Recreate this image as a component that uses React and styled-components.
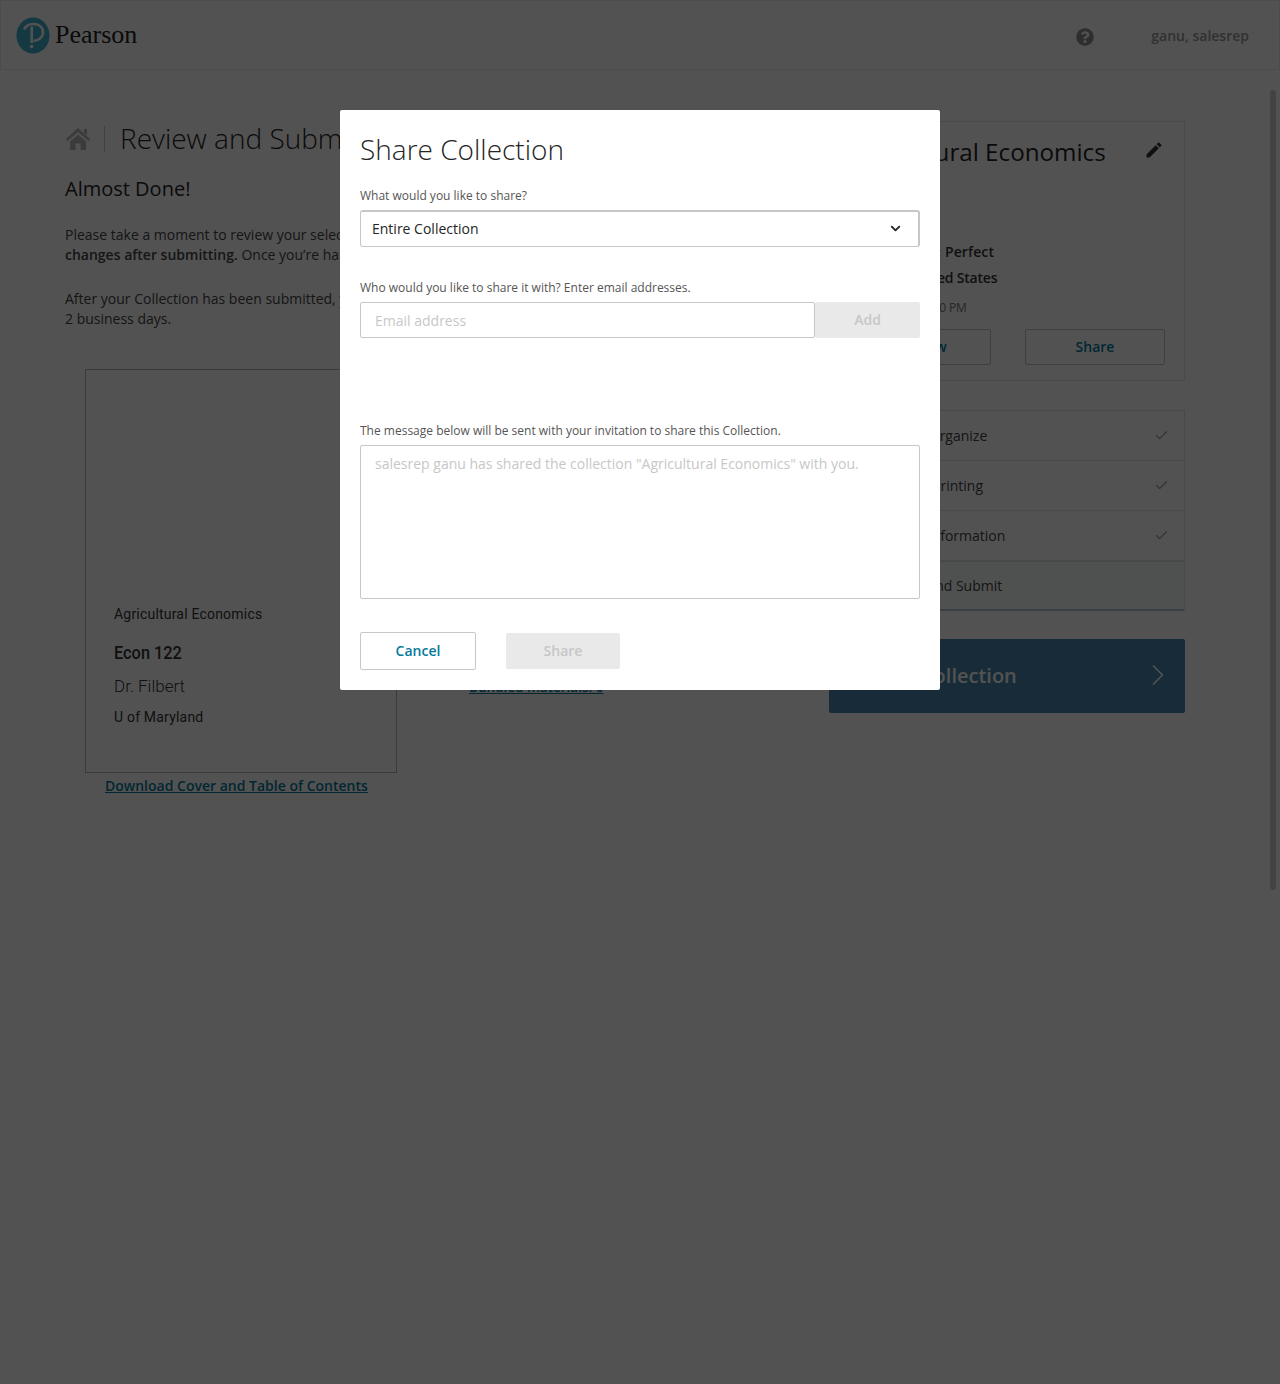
import React from "react";
import styled, { createGlobalStyle } from "styled-components";
import { FaQuestionCircle } from "react-icons/fa";
import { MdEdit } from "react-icons/md";
import { Check, ChevronDown, ChevronRight } from "lucide-react";

const GlobalStyle = createGlobalStyle`
  html, body {
    margin: 0;
    padding: 0;
    background: #fff;
    font-family: "Open Sans", "Liberation Sans", sans-serif;
    color: #333;
  }
  * {
    box-sizing: border-box;
  }
`;

const Page = styled.div`
  position: relative;
  width: 1280px;
  height: 1384px;
  overflow: hidden;
  background: #fff;
`;

const Header = styled.header`
  height: 70px;
  display: flex;
  align-items: center;
  padding: 0 30px 0 15px;
  border: 1px solid #ebebeb;
`;

const LogoWrap = styled.div`
  display: flex;
  align-items: center;
  gap: 5px;
  flex: 1;
`;

const LogoText = styled.span`
  font-family: "Liberation Serif", serif;
  font-size: 26px;
  color: #222;
`;

const HelpIcon = styled(FaQuestionCircle)`
  width: 18px;
  height: 18px;
  color: #8f8f8f;
  margin: 4px 57px 0 0;
`;

const UserName = styled.span`
  font-size: 14px;
  font-weight: 600;
  color: #9a9a9a;
`;

const ScrollThumb = styled.div`
  position: absolute;
  top: 90px;
  left: 1270px;
  width: 6px;
  height: 800px;
  border-radius: 3px;
  background: #d0d0d0;
`;

const Main = styled.main`
  display: flex;
  padding: 51px 0 0 65px;
`;

const LeftCol = styled.div`
  width: 764px;
  flex: none;
`;

const TitleRow = styled.div`
  display: flex;
  align-items: center;
  height: 36px;
`;

const HomeSvg = styled.svg`
  margin-left: 1px;
  fill: #b9b9b9;
`;

const Divider = styled.span`
  width: 1px;
  height: 26px;
  background: #c9c9c9;
  margin: 0 15px 0 14px;
`;

const PageTitle = styled.h1`
  margin: -2px 0 0;
  font-size: 28px;
  font-weight: 300;
  color: #252525;
  white-space: nowrap;
`;

const SubTitle = styled.h2`
  margin: 18px 0 0;
  font-size: 20px;
  line-height: 28px;
  font-weight: 400;
  color: #252525;
`;

const Paragraph = styled.p`
  margin: ${(props) => (props.$first ? "22px" : "24px")} 0 0;
  font-size: 14px;
  line-height: 20px;
  color: #444;
  white-space: nowrap;

  strong {
    font-weight: 600;
  }
`;

const CoverRow = styled.div`
  display: flex;
  margin: 40px 0 0 20px;
`;

const CoverCol = styled.div`
  width: 312px;
  flex: none;
`;

const CoverBox = styled.div`
  height: 404px;
  border: 1px solid #b5b5b5;
  padding: 0 0 45px 28px;
  display: flex;
  flex-direction: column;
  justify-content: flex-end;
  font-family: Roboto, "Liberation Sans", sans-serif;
  color: #333;
`;

const CoverTitle = styled.div`
  font-size: 14px;
  line-height: 18px;
  letter-spacing: 0.2px;
`;

const CoverCourse = styled.div`
  margin-top: 18px;
  font-size: 19px;
  line-height: 24px;
  font-weight: 500;
  transform: scaleX(0.86);
  transform-origin: left center;
`;

const CoverAuthor = styled.div`
  margin-top: 9px;
  font-size: 17px;
  line-height: 24px;
  font-weight: 300;
`;

const CoverSchool = styled.div`
  margin-top: 9px;
  font-size: 14px;
  line-height: 20px;
  letter-spacing: 0.2px;
`;

const TealLink = styled.a`
  color: #047a9c;
  font-size: ${(props) => (props.$small ? "13.5px" : "14px")};
  font-weight: 600;
  text-decoration: underline;
  white-space: nowrap;
`;

const DownloadRow = styled.div`
  padding-left: 20px;
  margin-top: 2px;
  line-height: 20px;
`;

const BundledCol = styled.div`
  margin-left: 72px;
  padding-top: 307px;
  line-height: 20px;
`;

const RightCol = styled.aside`
  width: 356px;
  flex: none;
`;

const SummaryCard = styled.section`
  height: 260px;
  border: 1px solid #e3e3e3;
  padding: 11px 19px 0;
`;

const SummaryHead = styled.div`
  display: flex;
  justify-content: space-between;
  align-items: flex-start;
`;

const SummaryTitle = styled.h2`
  margin: 0;
  font-size: 24.2px;
  line-height: 38px;
  font-weight: 400;
  color: #252525;
`;

const EditIcon = styled(MdEdit)`
  width: 20px;
  height: 20px;
  margin: 7px 1px 0 0;
  color: #333;
`;

const SpecLine = styled.div`
  margin-top: ${(props) => props.$top}px;
  font-size: ${(props) => (props.$note ? "12px" : "14px")};
  line-height: 20px;
  font-weight: ${(props) => (props.$note ? 400 : 600)};
  letter-spacing: ${(props) => props.$tracking || 0}px;
  color: ${(props) => (props.$note ? "#777" : "#333")};
`;

const SummaryActions = styled.div`
  display: flex;
  justify-content: space-between;
  margin-top: 11px;
`;

const OutlineButton = styled.button`
  width: ${(props) => props.$width}px;
  height: 36px;
  padding: 0 0 2px;
  background: #fff;
  border: 1px solid #c7c7c7;
  border-radius: 2px;
  color: #047a9c;
  font-family: inherit;
  font-size: 14px;
  font-weight: 600;
`;

const StepList = styled.ul`
  list-style: none;
  margin: 29px 0 0;
  padding: 0;
  border: 1px solid #e3e3e3;
`;

const StepItem = styled.li`
  height: 50px;
  display: flex;
  align-items: center;
  justify-content: space-between;
  padding: 0 15px 0 48px;
  font-size: 14px;
  color: #444;
  border-bottom: ${(props) =>
    props.$active ? "2px solid #a9c9d2" : "1px solid #e3e3e3"};
  border-top: ${(props) => (props.$active ? "1px solid #cfe2de" : "none")};
  background: ${(props) => (props.$active ? "#f4fbf8" : "#fff")};

  &:last-child {
    margin-bottom: -1px;
  }
`;

const StepCheck = styled(Check)`
  width: 15px;
  height: 15px;
  color: #a0a0a0;
`;

const SubmitButton = styled.button`
  width: 356px;
  height: 74px;
  margin-top: 28px;
  display: flex;
  align-items: center;
  justify-content: space-between;
  padding: 0 9px 2px 18px;
  border: none;
  border-radius: 2px;
  background: #478aad;
  color: #fff;
  font-family: inherit;
  font-size: 20px;
  font-weight: 600;
`;

const Overlay = styled.div`
  position: absolute;
  inset: 0;
  background: rgba(0, 0, 0, 0.68);
`;

const Modal = styled.div`
  position: absolute;
  top: 110px;
  left: 340px;
  width: 600px;
  height: 580px;
  background: #fff;
  border-radius: 2px;
  padding: 19px 20px 20px;
`;

const ModalTitle = styled.h2`
  margin: 0;
  font-size: 28px;
  line-height: 40px;
  font-weight: 300;
  color: #252525;
`;

const FieldLabel = styled.label`
  display: block;
  margin-top: ${(props) => props.$top}px;
  font-size: 12px;
  line-height: 16px;
  color: #555;
`;

const SelectBox = styled.div`
  height: 37px;
  margin-top: 6px;
  display: flex;
  align-items: center;
  justify-content: space-between;
  padding: 0 15px 2px 11px;
  border: 1px solid #c7c7c7;
  border-top-width: 2px;
  border-right-width: 2px;
  border-radius: 3px;
  font-size: 14px;
  color: #252525;
`;

const EmailRow = styled.div`
  display: flex;
  margin-top: 6px;
`;

const EmailInput = styled.input`
  width: 455px;
  height: 36px;
  padding: 0 14px;
  border: 1px solid #c7c7c7;
  border-radius: 2px;
  outline: none;
  font-family: inherit;
  font-size: 14px;

  &::placeholder {
    color: #c7c7c7;
    opacity: 1;
  }
`;

const DisabledButton = styled.button`
  width: ${(props) => props.$width}px;
  height: 36px;
  padding: 0 0 2px;
  border: none;
  border-radius: 2px;
  background: #e9e9e9;
  color: #c7c7c7;
  font-family: inherit;
  font-size: 14px;
  font-weight: 600;
`;

const MessageBox = styled.textarea`
  display: block;
  width: 560px;
  height: 154px;
  margin-top: 6px;
  padding: 8px 14px;
  border: 1px solid #c7c7c7;
  border-radius: 2px;
  outline: none;
  resize: none;
  font-family: inherit;
  font-size: 14px;
  line-height: 20px;

  &::placeholder {
    color: #c7c7c7;
    opacity: 1;
  }
`;

const ModalActions = styled.div`
  display: flex;
  align-items: center;
  gap: 30px;
  margin-top: 33px;
`;

const CancelButton = styled.button`
  width: 116px;
  height: 38px;
  padding: 0 0 2px;
  background: #fff;
  border: 1px solid #c7c7c7;
  border-radius: 2px;
  color: #047a9c;
  font-family: inherit;
  font-size: 14px;
  font-weight: 600;
`;

const PearsonMark = () => (
  <svg width="34" height="37" viewBox="0 0 34 37">
    <ellipse cx="17" cy="18.5" rx="16.5" ry="18" fill="#3fb0cc" />
    <path
      d="M8 12.5C10 8.5 14 6.8 18 7c5.5 0.3 9 3.7 9 8.3 0 5-4 8.2-9.5 8.7"
      fill="none"
      stroke="#fff"
      strokeWidth="2.6"
    />
    <path d="M14.4 9.500h2.600v16.500h-2.600z" fill="#fff" />
    <circle cx="15.7" cy="29.500" r="1.800" fill="#fff" />
  </svg>
);

const HomeGlyph = () => (
  <HomeSvg width="24" height="22" viewBox="0 0 24 22">
    <path d="M12 0 24 11 22.500 13 12 4 1.500 13 0 11Z" />
    <path d="M18 1h3v6.500l-3-2.800Z" />
    <path d="M4 13.500 12 6.500 20 13.500V22H14.500V15.500H9.500V22H4Z" />
  </HomeSvg>
);

const App = () => {
  return (
    <Page>
      <GlobalStyle />
      <Header>
        <LogoWrap>
          <PearsonMark />
          <LogoText>Pearson</LogoText>
        </LogoWrap>
        <HelpIcon />
        <UserName>ganu, salesrep</UserName>
      </Header>
      <ScrollThumb />
      <Main>
        <LeftCol>
          <TitleRow>
            <HomeGlyph />
            <Divider />
            <PageTitle>Review and Submit</PageTitle>
          </TitleRow>
          <SubTitle>Almost Done!</SubTitle>
          <Paragraph $first>
            Please take a moment to review your selections.
            <br />
            <strong>changes after submitting.</strong> Once you’re happy with it, submit.
          </Paragraph>
          <Paragraph>
            After your Collection has been submitted, you will hear from us within
            <br />2 business days.
          </Paragraph>
          <CoverRow>
            <CoverCol>
              <CoverBox>
                <CoverTitle>Agricultural Economics</CoverTitle>
                <CoverCourse>Econ 122</CoverCourse>
                <CoverAuthor>Dr. Filbert</CoverAuthor>
                <CoverSchool>U of Maryland</CoverSchool>
              </CoverBox>
              <DownloadRow>
                <TealLink href="#">Download Cover and Table of Contents</TealLink>
              </DownloadRow>
            </CoverCol>
            <BundledCol>
              <TealLink href="#" $small>Bundled materials: 0</TealLink>
            </BundledCol>
          </CoverRow>
        </LeftCol>
        <RightCol>
          <SummaryCard>
            <SummaryHead>
              <SummaryTitle>Agricultural Economics</SummaryTitle>
              <EditIcon />
            </SummaryHead>
            <SpecLine $top={71} $tracking={0.1}>Binding Type: Perfect</SpecLine>
            <SpecLine $top={6} $tracking={-0.2}>Country: United States</SpecLine>
            <SpecLine $top={10} $tracking={-0.15} $note>Saved 3/1/19 3:30 PM</SpecLine>
            <SummaryActions>
              <OutlineButton $width={142}>Preview</OutlineButton>
              <OutlineButton $width={140}>Share</OutlineButton>
            </SummaryActions>
          </SummaryCard>
          <StepList>
            <StepItem>Build &amp; Organize<StepCheck strokeWidth={2} /></StepItem>
            <StepItem>Custom Printing<StepCheck strokeWidth={2} /></StepItem>
            <StepItem>Course Information<StepCheck strokeWidth={2} /></StepItem>
            <StepItem $active>Review and Submit</StepItem>
          </StepList>
          <SubmitButton>
            Submit Collection
            <ChevronRight size={36} strokeWidth={1.1} />
          </SubmitButton>
        </RightCol>
      </Main>
      <Overlay />
      <Modal>
        <ModalTitle>Share Collection</ModalTitle>
        <FieldLabel $top={19}>What would you like to share?</FieldLabel>
        <SelectBox>
          Entire Collection
          <ChevronDown size={15} strokeWidth={3} />
        </SelectBox>
        <FieldLabel $top={33}>Who would you like to share it with? Enter email addresses.</FieldLabel>
        <EmailRow>
          <EmailInput placeholder="Email address" />
          <DisabledButton $width={105}>Add</DisabledButton>
        </EmailRow>
        <FieldLabel $top={85}>The message below will be sent with your invitation to share this Collection.</FieldLabel>
        <MessageBox placeholder={'salesrep ganu has shared the collection "Agricultural Economics" with you.'} />
        <ModalActions>
          <CancelButton>Cancel</CancelButton>
          <DisabledButton $width={114}>Share</DisabledButton>
        </ModalActions>
      </Modal>
    </Page>
  );
};

export default App;
